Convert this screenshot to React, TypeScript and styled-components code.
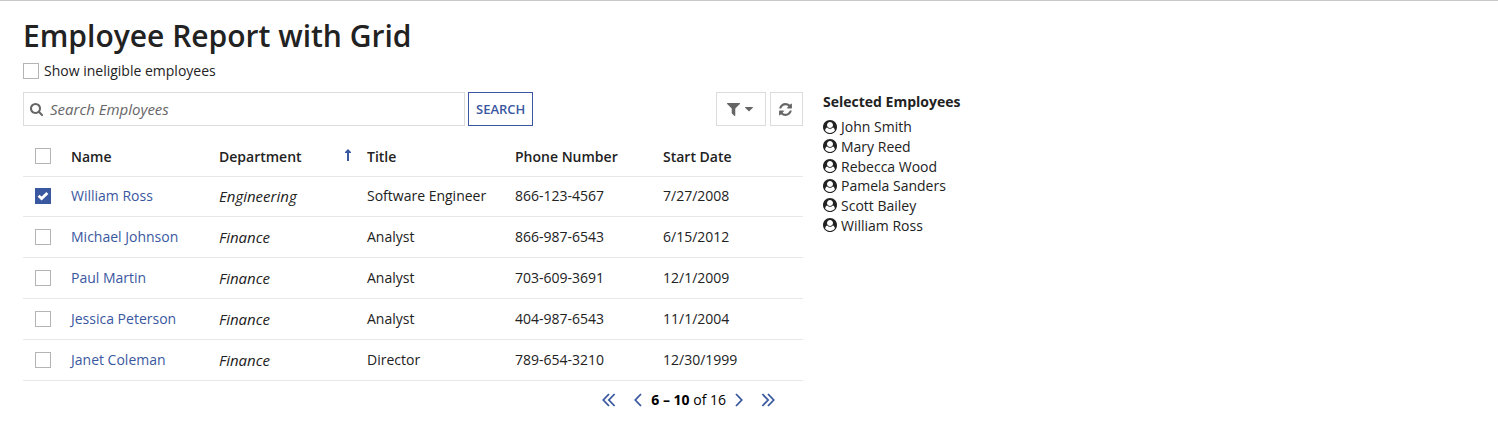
import React, { useState } from "react";
import styled, { createGlobalStyle } from "styled-components";

const GlobalStyle = createGlobalStyle`
  * { box-sizing: border-box; }
  body {
    margin: 0;
    background: #fff;
    color: #222;
    font: 14px/20px "Open Sans", "Noto Sans", sans-serif;
  }
`;

const blue = "#3a58a0";
const grey = "#666";

const Page = styled.main`
  border-top: 1px solid #c8c8c8;
  padding: 15px 23px 20px;
`;

const Title = styled.h1`
  margin: 0 0 5px;
  font-size: 30px;
  font-weight: 600;
  line-height: 40px;
`;

const Columns = styled.div`
  display: grid;
  grid-template-columns: minmax(0, 780fr) minmax(0, 652fr);
  column-gap: 20px;
  margin-top: 11px;
`;

const CheckLabel = styled.label`
  display: flex;
  align-items: center;
  gap: 5px;
  width: fit-content;
`;

const Check = styled.input.attrs({ type: "checkbox" })`
  appearance: none;
  display: block;
  flex: none;
  width: 16px;
  height: 16px;
  margin: 0;
  border: 1px solid #b4b4b4;
  background: #fff;
`;

const BoxWrap = styled.span`
  position: relative;
  display: block;
  width: 16px;
  height: 16px;

  input:checked {
    border-color: ${blue};
    background: ${blue};
  }
  svg {
    position: absolute;
    inset: 2px;
    display: none;
    pointer-events: none;
  }
  input:checked + svg { display: block; }
`;

const Toolbar = styled.div`
  display: flex;
  align-items: stretch;
  height: 34px;
`;

const SearchField = styled.label`
  display: flex;
  flex: 0 1 442px;
  align-items: center;
  gap: 6px;
  padding: 0 6px;
  border: 1px solid #dcdcdc;
  color: ${grey};
`;

const SearchInput = styled.input`
  flex: 1;
  min-width: 0;
  padding: 0;
  border: 0;
  outline: 0;
  color: #222;
  font: inherit;
  font-size: 15px;
  &::placeholder {
    color: ${grey};
    font-style: italic;
    opacity: 1;
  }
`;

const SearchButton = styled.button`
  margin-left: 3px;
  padding: 0 7px;
  border: 1px solid ${blue};
  background: #fff;
  color: ${blue};
  font: 600 13px/20px "Open Sans", "Noto Sans", sans-serif;
`;

const ToolGroup = styled.div`
  display: flex;
  gap: 4px;
  margin-left: auto;
`;

const ToolButton = styled.button<{ $wide?: boolean }>`
  display: flex;
  align-items: center;
  justify-content: center;
  gap: 5px;
  width: ${(p) => (p.$wide ? 50 : 33)}px;
  padding: 0 2px 0 0;
  border: 1px solid #dcdcdc;
  background: #fff;
  color: ${grey};
`;

const Grid = styled.table`
  width: 100%;
  height: 245px;
  margin-top: 10px;
  border-collapse: collapse;
  table-layout: fixed;
`;

const Row = styled.tr`
  height: 40px;
  border-bottom: 1px solid #e8e8e8;
`;

const HeadCell = styled.th`
  padding: 2px 8px 0;
  font-weight: 600;
  text-align: left;
`;

const Cell = styled.td`
  padding: 0 8px;
  white-space: nowrap;
`;

const DepartmentCell = styled(Cell)`
  font-size: 15px;
  font-style: italic;
`;

const CheckCol = styled.col`
  width: 40px;
`;

const BoxCell = styled.td`
  padding: 0 0 0 12px;
`;

const SortHead = styled.span`
  display: flex;
  align-items: center;
  justify-content: space-between;
`;

const NameLink = styled.a`
  color: ${blue};
  text-decoration: none;
`;

const Pager = styled.nav`
  display: flex;
  align-items: center;
  justify-content: flex-end;
  margin-top: 9px;
  padding-right: 26px;
  color: #000;
`;

const PageButton = styled.button`
  display: flex;
  align-items: center;
  justify-content: center;
  width: 18px;
  height: 20px;
  padding: 0;
  border: 0;
  background: none;
  color: ${blue};
`;

const PageStep = styled.div<{ $end?: boolean }>`
  display: flex;
  gap: 11px;
  margin: ${(p) => (p.$end ? "0 0 0 4px" : "0 4px 0 0")};
`;

const SideTitle = styled.h2`
  margin: 0 0 5px;
  font-size: 14px;
  font-weight: 700;
  line-height: 20px;
`;

const People = styled.ul`
  display: grid;
  grid-auto-rows: 1fr;
  min-height: 118px;
  margin: 0;
  padding: 0;
  list-style: none;
  line-height: 19px;
`;

const Person = styled.li`
  display: flex;
  align-items: center;
  gap: 4px;
`;

const icons = {
  search: {
    box: "0 0 1792 1792",
    path: "M1152 832q0-185-131.5-316.5t-316.5-131.5-316.5 131.5-131.5 316.5 131.5 316.5 316.5 131.5 316.5-131.5 131.5-316.5zm512 832q0 52-38 90t-90 38q-54 0-90-38l-343-342q-179 124-399 124-143 0-273.5-55.5t-225-150-150-225-55.5-273.5 55.5-273.5 150-225 225-150 273.5-55.5 273.5 55.5 225 150 150 225 55.5 273.5q0 220-124 399l343 343q37 37 37 90z",
  },
  filter: {
    box: "192 256 1408 1408",
    path: "M1595 295q17 41-14 70l-493 493v742q0 42-39 59-13 5-25 5-27 0-45-19l-256-256q-19-19-19-45v-486l-493-493q-31-29-14-70 17-39 59-39h1280q42 0 59 39z",
  },
  refresh: {
    box: "0 0 1792 1792",
    path: "M1639 1056q0 5-1 7-64 268-268 434.5t-478 166.5q-146 0-282.5-55t-243.5-157l-129 129q-19 19-45 19t-45-19-19-45v-448q0-26 19-45t45-19h448q26 0 45 19t19 45-19 45l-137 137q71 66 161 102t187 36q134 0 250-65t186-179q11-17 53-117 8-23 30-23h192q13 0 22.5 9.5t9.5 22.5zm25-800v448q0 26-19 45t-45 19h-448q-26 0-45-19t-19-45 19-45l138-138q-148-137-349-137-134 0-250 65t-186 179q-11 17-53 117-8 23-30 23h-199q-13 0-22.5-9.5t-9.5-22.5v-7q65-268 270-434.5t480-166.5q146 0 284 55.5t245 156.5l130-129q19-19 45-19t45 19 19 45z",
  },
  user: {
    box: "0 0 1792 1792",
    path: "M1523 1339q-22-155-87.5-257.5t-184.5-118.5q-67 74-159.5 115.5t-195.5 41.5-195.5-41.5-159.5-115.5q-119 16-184.5 118.5t-87.5 257.5q106 150 271 237.5t356 87.5 356-87.5 271-237.5zm-243-699q0-159-112.5-271.5t-271.5-112.5-271.5 112.5-112.5 271.5 112.5 271.5 271.5 112.5 271.5-112.5 112.5-271.5zm512 256q0 182-71 347.5t-190.5 286-285.5 191.5-349 71-349-71-285.5-191-190.5-286-71-348 71-348 191-286 286-191 348-71 348 71 286 191 191 286 71 348z",
  },
};

const Glyph = ({ name, size = 14 }: { name: keyof typeof icons; size?: number }) => (
  <svg width={size} height={size} viewBox={icons[name].box} fill="currentColor" aria-hidden="true">
    <path d={icons[name].path} />
  </svg>
);

const Caret = () => (
  <svg width="8" height="14" viewBox="0 0 8 14" fill="currentColor" aria-hidden="true">
    <path d="M0.5 5h7q.8.1.3.8L4.5 9q-.5.4-1 0L.2 5.8Q-.3 5.1.5 5z" />
  </svg>
);

const SortArrow = () => (
  <svg width="8" height="16" viewBox="0 0 8 16" fill={blue} aria-hidden="true">
    <path d="M5 0L8 3V4H6V12H4V4H2V3z" />
  </svg>
);

const Chevron = ({ double, flip }: { double?: boolean; flip?: boolean }) => (
  <svg width={double ? 14 : 8} height="14" viewBox={double ? "0 0 14 14" : "0 0 8 14"} fill="none" stroke="currentColor" strokeWidth="1.8" aria-hidden="true">
    <g transform={flip ? `translate(${double ? 14 : 8} 0) scale(-1 1)` : undefined}>
      <path d="M7 1L1.3 7L7 13" />
      {double && <path d="M12.6 1L6.9 7L12.6 13" />}
    </g>
  </svg>
);

const Box = ({ label, initial = false }: { label: string; initial?: boolean }) => {
  const [on, setOn] = useState(initial);
  return (
    <BoxWrap>
      <Check checked={on} onChange={() => setOn(!on)} aria-label={label} />
      <svg width="12" height="12" viewBox="0 0 12 12" fill="none" stroke="#fff" strokeWidth="2.8" aria-hidden="true">
        <path d="M1.6 5.8L4.6 8.6L10.4 3" />
      </svg>
    </BoxWrap>
  );
};

const employees = [
  ["William Ross", "Engineering", "Software Engineer", "866-123-4567", "7/27/2008"],
  ["Michael Johnson", "Finance", "Analyst", "866-987-6543", "6/15/2012"],
  ["Paul Martin", "Finance", "Analyst", "703-609-3691", "12/1/2009"],
  ["Jessica Peterson", "Finance", "Analyst", "404-987-6543", "11/1/2004"],
  ["Janet Coleman", "Finance", "Director", "789-654-3210", "12/30/1999"],
];

const selected = ["John Smith", "Mary Reed", "Rebecca Wood", "Pamela Sanders", "Scott Bailey", "William Ross"];

export default function App() {
  return (
    <>
      <GlobalStyle />
      <Page>
        <Title>Employee Report with Grid</Title>
        <CheckLabel>
          <Check />
          Show ineligible employees
        </CheckLabel>
        <Columns>
          <section>
            <Toolbar>
              <SearchField>
                <Glyph name="search" />
                <SearchInput placeholder="Search Employees" aria-label="Search Employees" />
              </SearchField>
              <SearchButton>SEARCH</SearchButton>
              <ToolGroup>
                <ToolButton $wide aria-label="Filter">
                  <Glyph name="filter" size={13} />
                  <Caret />
                </ToolButton>
                <ToolButton aria-label="Refresh">
                  <Glyph name="refresh" size={15} />
                </ToolButton>
              </ToolGroup>
            </Toolbar>
            <Grid>
              <colgroup>
                <CheckCol />
                <col />
                <col />
                <col />
                <col />
                <col />
              </colgroup>
              <thead>
                <Row>
                  <BoxCell>
                    <Box label="Select all" />
                  </BoxCell>
                  <HeadCell>Name</HeadCell>
                  <HeadCell aria-sort="ascending">
                    <SortHead>
                      Department
                      <SortArrow />
                    </SortHead>
                  </HeadCell>
                  <HeadCell>Title</HeadCell>
                  <HeadCell>Phone Number</HeadCell>
                  <HeadCell>Start Date</HeadCell>
                </Row>
              </thead>
              <tbody>
                {employees.map(([name, department, title, phone, start], i) => (
                  <Row key={name}>
                    <BoxCell>
                      <Box label={`Select ${name}`} initial={i === 0} />
                    </BoxCell>
                    <Cell>
                      <NameLink href="#">{name}</NameLink>
                    </Cell>
                    <DepartmentCell>{department}</DepartmentCell>
                    <Cell>{title}</Cell>
                    <Cell>{phone}</Cell>
                    <Cell>{start}</Cell>
                  </Row>
                ))}
              </tbody>
            </Grid>
            <Pager aria-label="Pages">
              <PageStep>
                <PageButton aria-label="First page">
                  <Chevron double />
                </PageButton>
                <PageButton aria-label="Previous page">
                  <Chevron />
                </PageButton>
              </PageStep>
              <span>
                <b>6 – 10</b> of 16
              </span>
              <PageStep $end>
                <PageButton aria-label="Next page">
                  <Chevron flip />
                </PageButton>
                <PageButton aria-label="Last page">
                  <Chevron double flip />
                </PageButton>
              </PageStep>
            </Pager>
          </section>
          <aside>
            <SideTitle>Selected Employees</SideTitle>
            <People>
              {selected.map((name) => (
                <Person key={name}>
                  <Glyph name="user" />
                  {name}
                </Person>
              ))}
            </People>
          </aside>
        </Columns>
      </Page>
    </>
  );
}
